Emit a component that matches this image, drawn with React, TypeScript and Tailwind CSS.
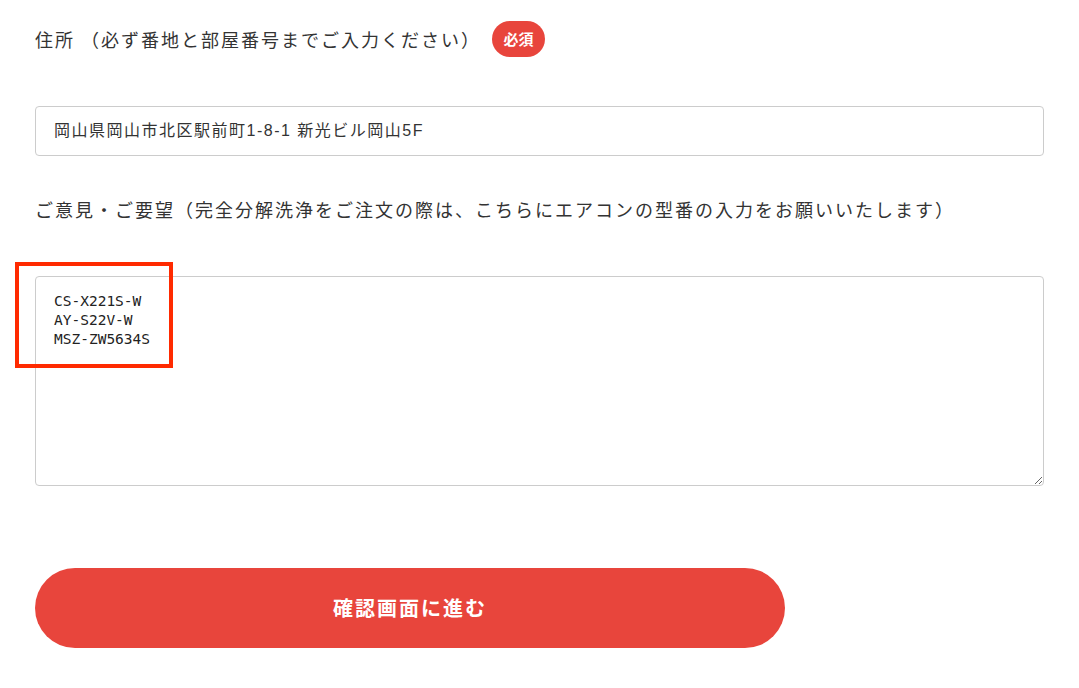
import React from "react";

export default function App() {
  const jp = { fontFamily: '"Noto Sans CJK JP", "Noto Sans", sans-serif' };
  return (
    <div className="min-h-[688px] w-[1079px] bg-white text-[#333]" style={jp}>
      <div className="pl-[35px] pr-[35px] pt-[21px]">
        <div className="flex h-[36px] items-center">
          <span className="text-[18px] tracking-[2px] leading-none">住所 （必ず番地と部屋番号までご入力ください）</span>
          <span className="ml-[11px] flex h-[36px] w-[53px] items-center justify-center rounded-full bg-[#e8453c] text-[15px] font-bold text-white">必須</span>
        </div>
        <div className="mt-[49px] flex h-[50px] w-[1009px] items-center rounded-[4px] border border-[#cccccc] pl-[18px] text-[16px] tracking-[1.5px] text-[#333]" style={{ fontFamily: '"Liberation Sans", "Noto Sans CJK JP", sans-serif' }}>
          岡山県岡山市北区駅前町1-8-1 新光ビル岡山5F
        </div>
        <div className="mt-[40px] flex h-[26px] items-center">
          <span className="text-[18px] tracking-[2px] leading-none">ご意見・ご要望（完全分解洗浄をご注文の際は、こちらにエアコンの型番の入力をお願いいたします）</span>
        </div>
        <div className="relative mt-[54px]">
          <textarea
            className="block h-[210px] w-[1009px] rounded-[4px] border border-[#cccccc] pl-[18px] pt-[15px] text-[14.5px] leading-[19px] text-[#222] outline-none"
            style={{ fontFamily: '"DejaVu Sans Mono", monospace' }}
            defaultValue={"CS-X221S-W\nAY-S22V-W\nMSZ-ZW5634S"}
          />
          <div className="pointer-events-none absolute left-[-20px] top-[-14px] h-[106px] w-[158px] border-[4px] border-[#ff2a00]" />
        </div>
        <button className="mt-[82px] flex h-[80px] w-[750px] items-center justify-center rounded-full bg-[#e8453c] text-[20px] font-bold tracking-[0.1em] text-white">
          確認画面に進む
        </button>
      </div>
    </div>
  );
}
